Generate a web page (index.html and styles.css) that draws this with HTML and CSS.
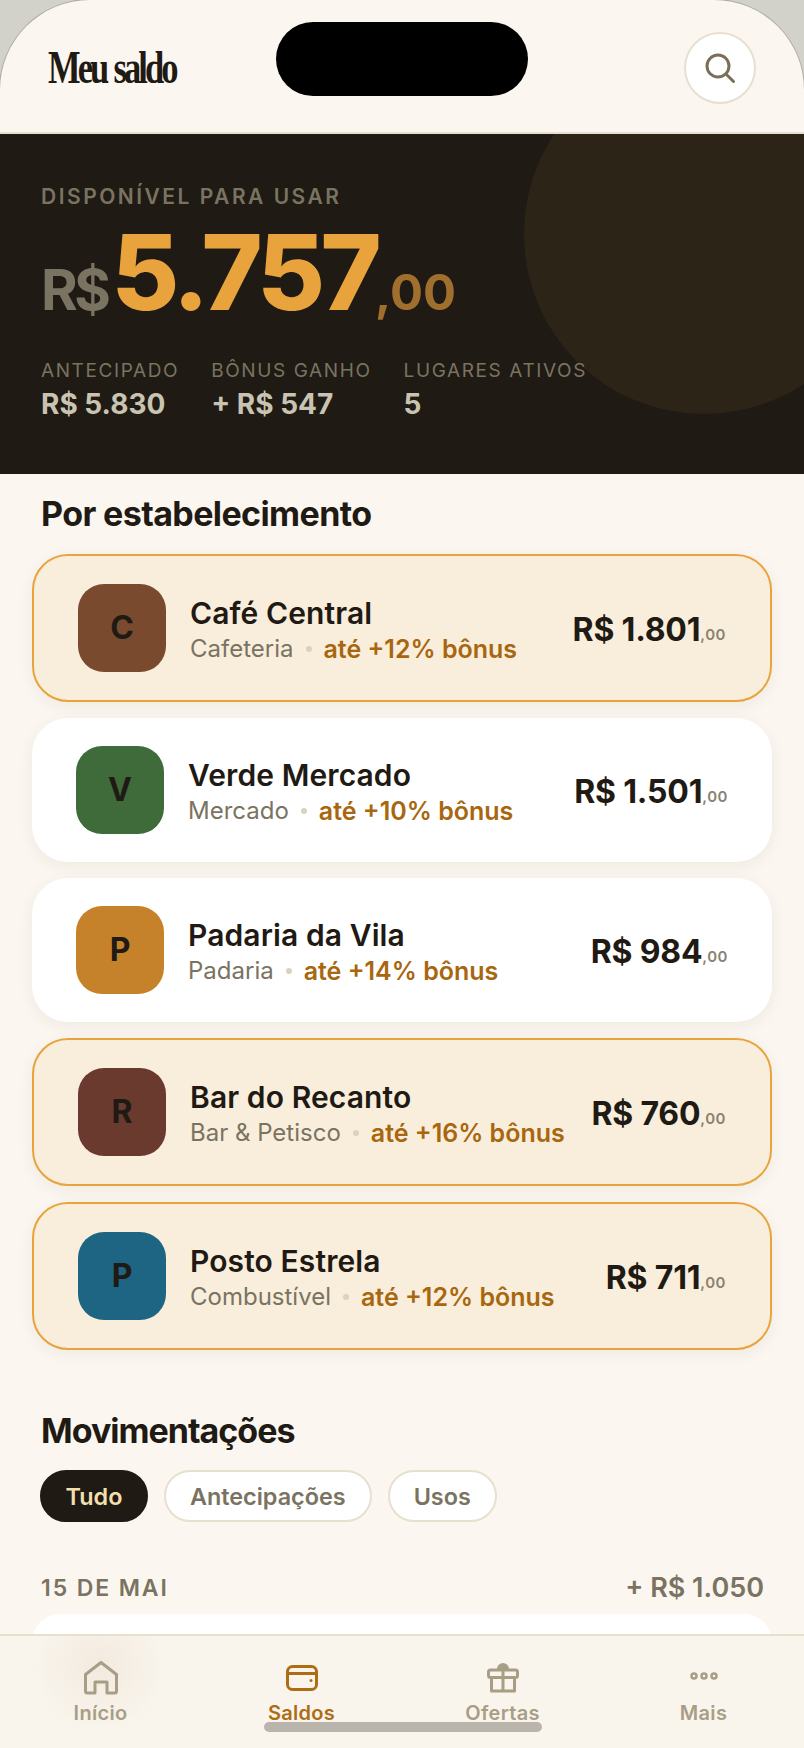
FILE: index.html
```html
<!DOCTYPE html>
<html lang="pt-BR">

<head>
    <meta charset="UTF-8">
    <meta name="viewport" content="width=device-width, initial-scale=1.0">
    <title>Meu saldo</title>
    <link rel="stylesheet" href="styles.css">
</head>

<body>
    <div class="screen">
        <div class="island"></div>

        <header class="topbar">
            <div class="logo">Meu saldo</div>
            <button class="search-button" aria-label="Buscar">
                <svg width="32" height="32" viewBox="0 0 32 32" fill="none" stroke="#7a7059" stroke-width="3" stroke-linecap="round">
                    <circle cx="14" cy="14" r="11"></circle>
                    <path d="M22.5 22.5 L29.5 29.5"></path>
                </svg>
            </button>
        </header>

        <section class="hero">
            <div class="hero-circle"></div>
            <div class="hero-label">DISPONÍVEL PARA USAR</div>
            <div class="hero-amount">
                <span class="hero-currency">R$</span>
                <span class="hero-value">5.757</span>
                <span class="hero-cents">,00</span>
            </div>
            <div class="hero-stats">
                <div>
                    <div class="stat-label">ANTECIPADO</div>
                    <div class="stat-value">R$ 5.830</div>
                </div>
                <div>
                    <div class="stat-label">BÔNUS GANHO</div>
                    <div class="stat-value">+ R$ 547</div>
                </div>
                <div>
                    <div class="stat-label">LUGARES ATIVOS</div>
                    <div class="stat-value">5</div>
                </div>
            </div>
        </section>

        <main class="content">
            <h2 class="section-title">Por estabelecimento</h2>

            <div class="place-list">
                <div class="place highlighted">
                    <div class="place-icon brown">C</div>
                    <div class="place-info">
                        <div class="place-name">Café Central</div>
                        <div class="place-sub">Cafeteria <span class="dot"></span> <span class="bonus">até +12% bônus</span></div>
                    </div>
                    <div class="place-amount">R$ 1.801<span class="cents">,00</span></div>
                </div>

                <div class="place">
                    <div class="place-icon green">V</div>
                    <div class="place-info">
                        <div class="place-name">Verde Mercado</div>
                        <div class="place-sub">Mercado <span class="dot"></span> <span class="bonus">até +10% bônus</span></div>
                    </div>
                    <div class="place-amount">R$ 1.501<span class="cents">,00</span></div>
                </div>

                <div class="place">
                    <div class="place-icon amber">P</div>
                    <div class="place-info">
                        <div class="place-name">Padaria da Vila</div>
                        <div class="place-sub">Padaria <span class="dot"></span> <span class="bonus">até +14% bônus</span></div>
                    </div>
                    <div class="place-amount">R$ 984<span class="cents">,00</span></div>
                </div>

                <div class="place highlighted">
                    <div class="place-icon wine">R</div>
                    <div class="place-info">
                        <div class="place-name">Bar do Recanto</div>
                        <div class="place-sub">Bar &amp; Petisco <span class="dot"></span> <span class="bonus">até +16% bônus</span></div>
                    </div>
                    <div class="place-amount">R$ 760<span class="cents">,00</span></div>
                </div>

                <div class="place highlighted">
                    <div class="place-icon blue">P</div>
                    <div class="place-info">
                        <div class="place-name">Posto Estrela</div>
                        <div class="place-sub">Combustível <span class="dot"></span> <span class="bonus">até +12% bônus</span></div>
                    </div>
                    <div class="place-amount">R$ 711<span class="cents">,00</span></div>
                </div>
            </div>

            <h2 class="section-title moves-title">Movimentações</h2>

            <div class="chips">
                <button class="chip active">Tudo</button>
                <button class="chip">Antecipações</button>
                <button class="chip">Usos</button>
            </div>

            <div class="day-row">
                <span class="day-label">15 DE MAI</span>
                <span class="day-total">+ R$ 1.050</span>
            </div>

            <div class="move-card"></div>
        </main>

        <nav class="bottom-nav">
            <a class="nav-item">
                <svg width="36" height="36" viewBox="0 0 36 36" fill="none" stroke="currentColor" stroke-width="3" stroke-linejoin="round">
                    <path d="M2.5 14.5 L18 2.5 L33.5 14.5 V31 a2 2 0 0 1 -2 2 H24 V22 H12 V33 H4.500 a2 2 0 0 1 -2 -2 Z"></path>
                </svg>
                Início
            </a>
            <a class="nav-item active">
                <svg width="36" height="36" viewBox="0 0 36 36" fill="none" stroke="currentColor" stroke-width="3">
                    <rect x="3.500" y="6.500" width="29" height="23" rx="5"></rect>
                    <path d="M3.500 13.500 H32.500"></path>
                    <circle cx="27" cy="20.500" r="1.500" fill="currentColor" stroke="none"></circle>
                </svg>
                Saldos
            </a>
            <a class="nav-item">
                <svg width="36" height="36" viewBox="0 0 36 36" fill="none" stroke="currentColor" stroke-width="3" stroke-linejoin="round">
                    <path d="M12 9 a6 6 0 0 1 12 0 Z" fill="currentColor" stroke="none"></path>
                    <rect x="3.500" y="10" width="29" height="7.500" rx="2"></rect>
                    <path d="M6.500 17.500 V31 H29.500 V17.500 M18 10 V31"></path>
                </svg>
                Ofertas
            </a>
            <a class="nav-item">
                <svg width="36" height="36" viewBox="0 0 36 36" fill="none" stroke="currentColor" stroke-width="2.500">
                    <circle cx="8" cy="16" r="2.500"></circle>
                    <circle cx="18" cy="16" r="2.500"></circle>
                    <circle cx="28" cy="16" r="2.500"></circle>
                </svg>
                Mais
            </a>
        </nav>

        <div class="home-indicator"></div>
    </div>
</body>

</html>
```

FILE: styles.css
```css
* {
    box-sizing: border-box;
}

html,
body {
    margin: 0;
    padding: 0;
    height: 100%;
    overflow: hidden;
    background-color: #d3d2ca;
}

body {
    font-family: "Inter", "Liberation Sans", sans-serif;
    color: #1f1a14;
}

.screen {
    position: relative;
    height: 1748px;
    overflow: hidden;
    background-color: #fbf7f0;
    border-radius: 90px 90px 0 0;
    box-shadow: 0 0 0 1px #aeaca4;
}

.island {
    position: absolute;
    top: 22px;
    left: 276px;
    width: 252px;
    height: 74px;
    border-radius: 37px;
    background: #000;
    z-index: 5;
}

.topbar {
    height: 134px;
    padding: 32px 48px 0;
    display: flex;
    justify-content: space-between;
    align-items: flex-start;
    border-bottom: 2px solid #e8e0cf;
}

.logo {
    font-family: "Liberation Serif", serif;
    font-size: 46px;
    font-weight: 700;
    line-height: 72px;
    letter-spacing: -3.900px;
    word-spacing: 2px;
    color: #1f1a14;
    white-space: nowrap;
    transform: scaleX(0.75);
    transform-origin: left center;
}

.search-button {
    width: 72px;
    height: 72px;
    padding: 0;
    border: 2px solid #e8e0cf;
    border-radius: 50%;
    background: #fff;
    display: flex;
    align-items: center;
    justify-content: center;
}

.hero {
    position: relative;
    height: 340px;
    padding: 51px 41px 0;
    overflow: hidden;
    background-color: #1f1a14;
}

.hero-circle {
    position: absolute;
    top: -80px;
    right: -80px;
    width: 360px;
    height: 360px;
    border-radius: 50%;
    background-color: #2d2418;
}

.hero-label,
.hero-amount,
.hero-stats {
    position: relative;
}

.hero-label {
    font-size: 21px;
    font-weight: 600;
    line-height: 24px;
    letter-spacing: 2.500px;
    color: #7a7361;
}

.hero-amount {
    display: flex;
    align-items: baseline;
    margin-top: 9px;
    line-height: 108px;
}

.hero-currency {
    font-size: 56px;
    font-weight: 700;
    letter-spacing: -3.500px;
    color: #7a7361;
}

.hero-value {
    margin-left: 4px;
    font-size: 104px;
    font-weight: 800;
    letter-spacing: -4.500px;
    color: #e8a33d;
}

.hero-cents {
    margin-left: -2px;
    font-size: 49px;
    font-weight: 700;
    color: #a06f2e;
}

.hero-stats {
    display: flex;
    gap: 32px;
    margin-top: 12px;
}

.stat-label {
    font-size: 19px;
    line-height: 24px;
    letter-spacing: 1.600px;
    color: #7a7361;
}

.stat-value {
    margin-top: 4px;
    font-size: 28px;
    font-weight: 700;
    line-height: 34px;
    color: #c9c4b2;
}

.content {
    padding: 18px 32px 0;
}

.section-title {
    margin: 0 0 0 9px;
    font-size: 34px;
    font-weight: 700;
    line-height: 44px;
    letter-spacing: -0.600px;
    color: #1f1a14;
}

.place-list {
    display: flex;
    flex-direction: column;
    gap: 16px;
    margin-top: 18px;
}

.place {
    display: flex;
    align-items: center;
    gap: 24px;
    padding: 28px 44px;
    border-radius: 36px;
    background: #fff;
    box-shadow: 0 4px 16px rgba(31, 26, 20, 0.06);
}

.place.highlighted {
    border: 2px solid #e8a33d;
    background: #f9eedc;
}

.place-icon {
    flex: none;
    width: 88px;
    height: 88px;
    padding-bottom: 2px;
    display: flex;
    align-items: center;
    justify-content: center;
    border-radius: 26px;
    font-size: 32px;
    font-weight: 700;
}

.brown {
    background: #7a4a2e;
}

.green {
    background: #3f6b3a;
}

.amber {
    background: #c6822b;
}

.wine {
    background: #6b3a2e;
}

.blue {
    background: #1d6583;
}

.place-info {
    flex: 1;
    min-width: 0;
    padding-top: 3px;
}

.place-name {
    font-size: 30px;
    font-weight: 600;
    line-height: 36px;
    letter-spacing: 0.100px;
}

.place-sub {
    display: flex;
    align-items: center;
    gap: 12px;
    margin-top: 3px;
    font-size: 24px;
    line-height: 30px;
    color: #7a7361;
    white-space: nowrap;
}

.dot {
    width: 6px;
    height: 6px;
    border-radius: 50%;
    background: #d9d2bd;
}

.bonus {
    font-size: 25px;
    font-weight: 600;
    color: #a8660f;
}

.place-amount {
    padding-top: 2px;
    font-size: 32px;
    font-weight: 700;
    letter-spacing: -0.200px;
    white-space: nowrap;
}

.cents {
    font-size: 15px;
    font-weight: 600;
    letter-spacing: 0.500px;
    vertical-align: 1px;
    color: #8a8272;
}

.moves-title {
    margin-top: 59px;
    letter-spacing: -1px;
}

.chips {
    display: flex;
    gap: 16px;
    margin: 17px 0 0 8px;
}

.chip {
    height: 52px;
    padding: 0 24px;
    border: 2px solid #e8e0cf;
    border-radius: 26px;
    background: #fff;
    font-family: inherit;
    font-size: 23.400px;
    font-weight: 600;
    color: #7a7361;
}

.chip.active {
    padding: 0 23.500px;
    border-color: #1f1a14;
    background: #1f1a14;
    color: #f3dfae;
}

.day-row {
    display: flex;
    justify-content: space-between;
    align-items: center;
    margin: 49px 8px 0 9px;
    line-height: 34px;
    color: #7a7361;
    font-weight: 600;
}

.day-label {
    font-size: 23px;
    letter-spacing: 1.900px;
}

.day-total {
    font-size: 27px;
}

.move-card {
    height: 120px;
    margin-top: 9px;
    border-radius: 28px;
    background: #fff;
}

.bottom-nav {
    position: absolute;
    left: 0;
    right: 0;
    bottom: 0;
    height: 114px;
    display: grid;
    grid-template-columns: repeat(4, 1fr);
    border-top: 2px solid #e8e0cf;
    background:
        radial-gradient(circle at 100px 30px, rgba(232, 214, 196, 0.35), rgba(232, 214, 196, 0) 70px),
        #f9f5ed;
}

.nav-item {
    display: flex;
    flex-direction: column;
    align-items: center;
    padding-top: 24px;
    gap: 5px;
    font-size: 20px;
    font-weight: 600;
    line-height: 24px;
    letter-spacing: 0.300px;
    color: #a89e85;
}

.nav-item.active {
    color: #ae6d14;
}

.home-indicator {
    position: absolute;
    left: 264px;
    bottom: 16px;
    width: 278px;
    height: 10px;
    border-radius: 5px;
    background: #b9b5ac;
}
```
